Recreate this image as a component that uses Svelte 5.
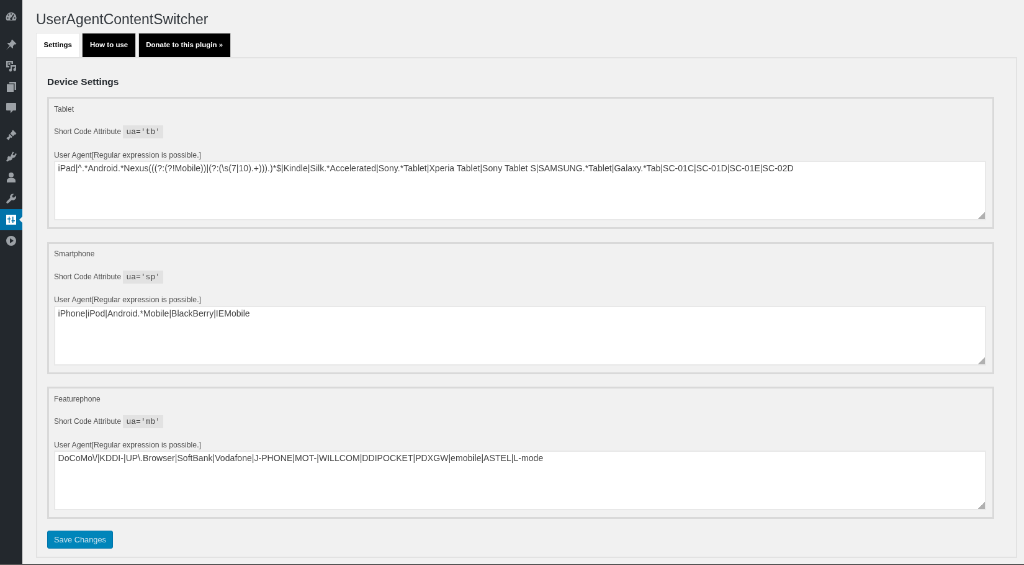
<script>
  const devices = [
    {
      name: 'Tablet',
      code: "ua='tb'",
      agents: 'iPad|^.*Android.*Nexus(((?:(?!Mobile))|(?:(\\s(7|10).+))).)*$|Kindle|Silk.*Accelerated|Sony.*Tablet|Xperia Tablet|Sony Tablet S|SAMSUNG.*Tablet|Galaxy.*Tab|SC-01C|SC-01D|SC-01E|SC-02D'
    },
    {
      name: 'Smartphone',
      code: "ua='sp'",
      agents: 'iPhone|iPod|Android.*Mobile|BlackBerry|IEMobile'
    },
    {
      name: 'Featurephone',
      code: "ua='mb'",
      agents: 'DoCoMo\\/|KDDI-|UP\\.Browser|SoftBank|Vodafone|J-PHONE|MOT-|WILLCOM|DDIPOCKET|PDXGW|emobile|ASTEL|L-mode'
    }
  ];
</script>

<div class="viewport">
  <div class="admin">
    <nav class="sidebar">
      <span class="item first">
        <svg viewBox="0 0 20 20"><path fill-rule="evenodd" d="M10 3a8.500 8.500 0 0 0-8.500 8.500c0 1.800.5 3.300 1.500 4.500h14c1-1.200 1.500-2.700 1.500-4.500A8.500 8.500 0 0 0 10 3zM9 4.500h2v2H9zM4.500 7l1.500-1 1 1.500-1.500 1zM3.500 11h2v2h-2zm11 0h2v2h-2zM13.500 6l1.500 1-3.200 5.200a1.900 1.900 0 1 1-1.700-1z"/></svg>
      </span>
      <span class="item pin">
        <svg viewBox="0 0 20 20"><path d="M11.500 1.500l7 7-1.500 1.200-1.200-.5-3 3c.5 1.500.3 3-.5 4L8.500 12.500 2 18.500l5.500-7L3.500 7.700c1-.8 2.500-1 4-.5l3-3-.3-1.300z"/></svg>
      </span>
      <span class="item">
        <svg viewBox="0 0 20 20"><path fill-rule="evenodd" d="M2 2h11v5h-2.500V4.500h-6V10H7v2.500H2zM5.500 5.500h3v3h-3zM9 9h9v7a2.300 2.300 0 1 1-2.200-2.200V11.500h-4.600V17a2.300 2.300 0 1 1-2.200-2.200z"/></svg>
      </span>
      <span class="item">
        <svg viewBox="0 0 20 20"><path d="M7 2h11v13h-2.500V4.500H7zM3 5.500h11V18H3z"/></svg>
      </span>
      <span class="item">
        <svg viewBox="0 0 20 20"><path d="M3 2h14a1 1 0 0 1 1 1v10a1 1 0 0 1-1 1h-4l-4 4.500V14H3a1 1 0 0 1-1-1V3a1 1 0 0 1 1-1z"/></svg>
      </span>
      <span class="item appearance">
        <svg viewBox="0 0 20 20"><path d="M13 1.500l5.500 5.500-1.500 2-1-.5-3 3L8.500 7l3-3-.5-1zM7.500 8l4.500 4.500-1.500 1.500-2-.5-2.500 4.500L2 14.500l4.500-2.500-.5-2.500z"/></svg>
      </span>
      <span class="item">
        <svg viewBox="0 0 20 20"><path d="M12.500 2.500l2 1-2.300 3.700 2.600 1.600 2.300-3.800 1.900 1.100-2.500 4.300c-.8 1.400-2.300 2-3.800 1.700L11 15c-.9 1.400-2.700 1.900-4.200 1.200L4 18.500 2 17l2.200-3c-.6-1.500-.2-3 1-4l.8-.7 2.500 1.500z"/></svg>
      </span>
      <span class="item">
        <svg viewBox="0 0 20 20"><circle cx="10" cy="6" r="4"/><path d="M3 18v-3c0-2 2-4 4-4h6c2 0 4 2 4 4v3z"/></svg>
      </span>
      <span class="item">
        <svg viewBox="0 0 20 20"><path d="M17.500 5.500l-3 3-2.500-.5-.5-2.500 3-3a5 5 0 0 0-6.200 6.500L2.500 15a1.800 1.800 0 0 0 2.500 2.500l6-5.300a5 5 0 0 0 6.500-6.700z"/></svg>
      </span>
      <span class="item current">
        <svg viewBox="0 0 20 20"><path fill-rule="evenodd" d="M2 2h16v16H2zM6 5v3H4v1.500h2V15h1.500V9.500H9V8H7.500V5zm6 0v6h-1.500v1.500H12V15h1.500v-2.500H16V11h-2.500V5z"/></svg>
      </span>
      <span class="item">
        <svg viewBox="0 0 20 20"><path fill-rule="evenodd" d="M10 2a8 8 0 1 1 0 16 8 8 0 0 1 0-16zM8 6v8l6-4z"/></svg>
      </span>
    </nav>

    <main class="content">
      <h1>UserAgentContentSwitcher</h1>
      <div class="tabs">
        <span class="tab active">Settings</span>
        <span class="tab">How to use</span>
        <span class="tab">Donate to this plugin »</span>
      </div>

      <section class="panel">
        <h2>Device Settings</h2>
        {#each devices as device}
          <div class="device">
            <p class="name">{device.name}</p>
            <p class="attr">Short Code Attribute <code>{device.code}</code></p>
            <label>
              <span>User Agent[Regular expression is possible.]</span>
              <textarea readonly value={device.agents}></textarea>
            </label>
          </div>
        {/each}
        <button type="button">Save Changes</button>
      </section>
    </main>
  </div>
</div>

<style>
  :global(body) {
    overflow: hidden;
    background: #f1f1f1;
    font-family: "Liberation Sans", Arial, sans-serif;
  }

  .viewport {
    width: 1024px;
    height: 565px;
    overflow: hidden;
  }

  /* the capture this copies was taken on a 1650px wide screen */
  .admin {
    display: flex;
    width: 1650px;
    height: 911px;
    transform: scale(0.6206);
    transform-origin: 0 0;
    will-change: transform;
    background: #f1f1f1;
    color: #4f4f4f;
    border-bottom: 2px solid #555;
    box-sizing: border-box;
  }

  .sidebar {
    flex: 0 0 36px;
    display: flex;
    flex-direction: column;
    background: #23282d;
  }

  .item {
    display: flex;
    align-items: center;
    justify-content: center;
    height: 34px;
    flex: none;
  }

  .item svg {
    width: 20px;
    height: 20px;
    fill: #9ca1a6;
  }

  .first { margin-top: 10px; }
  .pin { margin-top: 11px; }
  .appearance { margin-top: 10px; }

  .current {
    position: relative;
    background: #0073aa;
  }

  .current svg {
    fill: #fff;
  }

  .current::after {
    content: "";
    position: absolute;
    right: 0;
    top: 12px;
    border: 5px solid transparent;
    border-right-color: #f1f1f1;
    border-left-width: 0;
  }

  .content {
    flex: 1;
    padding: 0 11px 0 22px;
    min-width: 0;
  }

  h1 {
    margin: 0;
    padding-top: 16px;
    height: 37px;
    font-size: 23px;
    line-height: 30px;
    font-weight: 400;
    color: #32373c;
  }

  .tabs {
    display: flex;
    gap: 4px;
    height: 39px;
  }

  .tab {
    display: flex;
    align-items: center;
    padding: 0 11.500px 3px;
    background: #000;
    color: #fff;
    font-size: 11.500px;
    font-weight: 700;
    border: 1px solid #ccc;
    border-bottom: 0;
    box-sizing: border-box;
  }

  .tab.active {
    background: #fff;
    color: #000;
    border-color: #e5e5e5;
  }

  .panel {
    border: 2px solid #e2e2e2;
    height: 807px;
    padding: 0 35px 0 16px;
    box-sizing: border-box;
  }

  h2 {
    margin: 0;
    padding-top: 27px;
    height: 62px;
    box-sizing: border-box;
    font-size: 15.500px;
    line-height: 22px;
    font-weight: 700;
    color: #23282d;
  }

  .device {
    height: 213px;
    margin-bottom: 20.600px;
    padding: 0 10px 0 8px;
    border: 3px solid #d9d9d9;
    box-sizing: border-box;
  }

  p {
    margin: 0;
    font-size: 12px;
    color: #4f4f4f;
  }

  .name {
    padding-top: 7.500px;
    height: 35.500px;
    line-height: 19px;
  }

  .attr {
    height: 39.500px;
    line-height: 20px;
  }

  code {
    display: inline-block;
    padding: 1px 5px;
    background: #e2e2e2;
    color: #444;
    font-family: "Liberation Mono", monospace;
    font-size: 13px;
    line-height: 19px;
  }

  label {
    display: block;
    position: relative;
  }

  label::after {
    content: "";
    position: absolute;
    right: 2px;
    bottom: 2px;
    width: 11px;
    height: 11px;
    background: linear-gradient(135deg, transparent 50%, #b0b0b0 50%);
  }

  label span {
    display: block;
    margin-bottom: 1.500px;
    font-size: 12.250px;
    line-height: 16px;
    color: #4f4f4f;
  }

  textarea {
    display: block;
    width: 100%;
    height: 96px;
    margin: 0;
    padding: 0 4.500px;
    border: 2px solid #e8e8e8;
    background: #fff;
    color: #444;
    font-family: "Liberation Sans", Arial, sans-serif;
    font-size: 14.100px;
    line-height: 20px;
    box-sizing: border-box;
    outline: none;
    resize: none;
  }

  button {
    display: block;
    width: 106px;
    height: 29px;
    margin-top: -1.500px;
    padding: 0;
    background: #0085ba;
    border: 1px solid #0073aa;
    border-radius: 3px;
    color: #cfe4ef;
    font-family: inherit;
    font-size: 12.800px;
  }
</style>
